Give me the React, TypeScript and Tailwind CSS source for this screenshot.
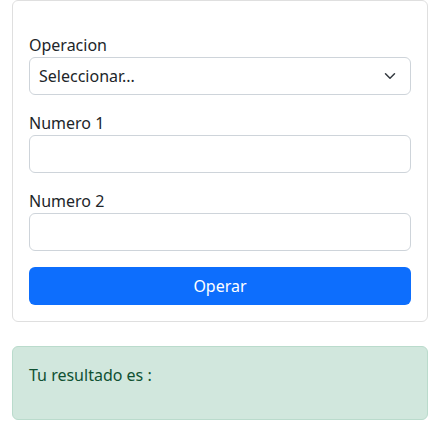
export default function App() {
  return (
    <div className="min-h-screen bg-white px-3 text-[16px] leading-6 text-[#212529] [font-family:'Noto_Sans',sans-serif]">
      {/* Form card */}
      <div className="rounded-md border border-[#dfdfdf] px-4 pt-8 pb-4">
        <label className="block">Operacion</label>
        <div className="flex h-[38px] items-center justify-between rounded-md border border-[#ced4da] pl-[9px] pr-3">
          <span>Seleccionar...</span>
          <svg width="16" height="12" viewBox="0 0 16 16" fill="none" aria-hidden="true">
            <path d="m2 5 6 6 6-6" stroke="#343a40" strokeWidth="2" strokeLinecap="round" strokeLinejoin="round" />
          </svg>
        </div>

        <label className="mt-4 block">Numero 1</label>
        <input className="block h-[38px] w-full rounded-md border border-[#ced4da] px-3 outline-none" />

        <label className="mt-4 block">Numero 2</label>
        <input className="block h-[38px] w-full rounded-md border border-[#ced4da] px-3 outline-none" />

        <button
          type="button"
          className="mt-4 flex h-[38px] w-full items-center justify-center rounded-md bg-[#0d6efd] text-white"
        >
          Operar
        </button>
      </div>

      {/* Result */}
      <div className="mt-6 rounded-md border border-[#badbcc] bg-[#d1e7dd] p-4 text-[#0f5132]">
        <p className="mb-4">Tu resultado es :</p>
      </div>
    </div>
  )
}
